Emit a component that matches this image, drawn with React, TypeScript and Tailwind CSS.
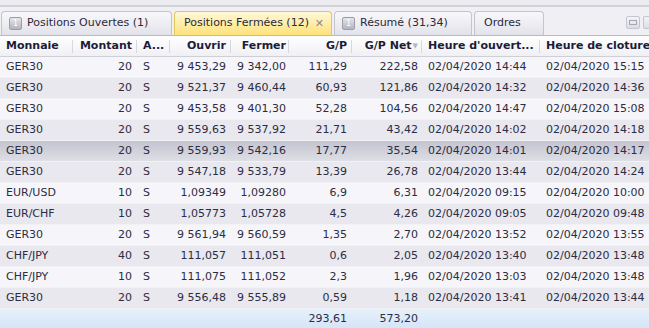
const cols = [
  { key: "m", label: "Monnaie", w: "w-[73px]", align: "text-left pl-[6px]" },
  { key: "q", label: "Montant", w: "w-[64px]", align: "text-right pr-[5px]" },
  { key: "a", label: "A...", w: "w-[33px]", align: "text-left pl-[6px]" },
  { key: "o", label: "Ouvrir", w: "w-[61px]", align: "text-right pr-[5px]" },
  { key: "f", label: "Fermer", w: "w-[58px]", align: "text-right pr-[3px]" },
  { key: "g", label: "G/P", w: "w-[63px]", align: "text-right pr-[5px]" },
  { key: "n", label: "G/P Net", w: "w-[70px]", align: "text-right pr-[4px]" },
  { key: "ho", label: "Heure d'ouvert...", w: "w-[118px]", align: "text-left pl-[6px]" },
  { key: "hc", label: "Heure de cloture", w: "w-[120px]", align: "text-left pl-[6px]" },
];

const d = "02/04/2020 ";

const rows = [
  ["GER30", "20", "S", "9 453,29", "9 342,00", "111,29", "222,58", d + "14:44", d + "15:15"],
  ["GER30", "20", "S", "9 521,37", "9 460,44", "60,93", "121,86", d + "14:32", d + "14:36"],
  ["GER30", "20", "S", "9 453,58", "9 401,30", "52,28", "104,56", d + "14:47", d + "15:08"],
  ["GER30", "20", "S", "9 559,63", "9 537,92", "21,71", "43,42", d + "14:02", d + "14:18"],
  ["GER30", "20", "S", "9 559,93", "9 542,16", "17,77", "35,54", d + "14:01", d + "14:17"],
  ["GER30", "20", "S", "9 547,18", "9 533,79", "13,39", "26,78", d + "13:44", d + "14:24"],
  ["EUR/USD", "10", "S", "1,09349", "1,09280", "6,9", "6,31", d + "09:15", d + "10:00"],
  ["EUR/CHF", "10", "S", "1,05773", "1,05728", "4,5", "4,26", d + "09:05", d + "09:48"],
  ["GER30", "20", "S", "9 561,94", "9 560,59", "1,35", "2,70", d + "13:52", d + "13:55"],
  ["CHF/JPY", "40", "S", "111,057", "111,051", "0,6", "2,05", d + "13:40", d + "13:48"],
  ["CHF/JPY", "10", "S", "111,075", "111,052", "2,3", "1,96", d + "13:03", d + "13:48"],
  ["GER30", "20", "S", "9 556,48", "9 555,89", "0,59", "1,18", d + "13:41", d + "13:44"],
];

function TabIcon() {
  return (
    <span className="flex h-[13px] w-[13px] shrink-0 items-center justify-center rounded-[2px] border border-[#9d9daa] bg-[linear-gradient(#e4e4ea,#b4b4c0)] text-[8px] leading-none text-white">
      1
    </span>
  );
}

function Tab({ label, icon, active, close, w }: { label: string; icon?: boolean; active?: boolean; close?: boolean; w: string }) {
  return (
    <div
      className={`flex h-[24px] shrink-0 ${w} items-center gap-[5px] rounded-t-[4px] border border-b-0 pl-[7px] pr-[7px] ${
        active
          ? "border-[#e5c45a] bg-[linear-gradient(#fff8d8,#ffe27a)]"
          : "border-[#c4c4d0] bg-[linear-gradient(#f8f8fb,#e2e2ea)]"
      }`}
    >
      {icon && <TabIcon />}
      <span className={`whitespace-nowrap text-[11px] text-[#2a2a3c] ${icon ? "" : "pl-[2px]"}`}>{label}</span>
      {close && <span className="ml-auto text-[11px] leading-none text-[#8a8a96]">✕</span>}
    </div>
  );
}

export default function App() {
  return (
    <div className="relative h-[328px] w-[649px] overflow-hidden bg-[#f6f6f9] font-['DejaVu_Sans',Verdana,sans-serif]">
      <div className="h-[5px] bg-[#ececf0]" />
      <div className="h-[2px] bg-[#d2d2da]" />
      <div className="flex h-[29px] items-end gap-[2px] border-b border-[#b9b9c6] bg-[#f0f0f4] pl-[1px]">
        <Tab label="Positions Ouvertes (1)" icon w="w-[171px]" />
        <Tab label="Positions Fermées (12)" active close w="w-[158px]" />
        <Tab label="Résumé (31,34)" icon w="w-[138px]" />
        <Tab label="Ordres" w="w-[70px]" />
        <div className="ml-auto mb-[6px] flex gap-[3px]">
          <div className="flex h-[13px] w-[14px] items-center justify-center rounded-[2px] border border-[#c6c6d0] bg-[linear-gradient(#f4f4f7,#dcdce4)]">
            <div className="h-[5px] w-[8px] border border-[#a6a6b2]" />
          </div>
          <div className="h-[13px] w-[6px] rounded-l-[2px] border border-r-0 border-[#c6c6d0] bg-[linear-gradient(#f4f4f7,#dcdce4)]" />
        </div>
      </div>

      <div className="flex h-[21px] items-center border-b border-[#cfcfd9] bg-[linear-gradient(#ffffff,#f0f0f4)]">
        {cols.map((c, i) => (
          <div
            key={c.key}
            className={`relative flex h-full shrink-0 items-center ${c.w} ${c.align.includes("right") ? "justify-end" : "justify-start"} ${c.align.replace("text-left", "").replace("text-right", "")}`}
          >
            <span className="whitespace-nowrap text-[11px] font-bold text-[#1c1c38]">{c.label}</span>
            {c.key === "n" && <span className="ml-[1px] text-[7px] text-[#b4b4c0]">▼</span>}
            {i < cols.length - 1 && (
              <span className="absolute right-0 top-[4px] h-[13px] w-px bg-[#d8d8e0]" />
            )}
          </div>
        ))}
      </div>

      {rows.map((r, ri) => (
        <div
          key={ri}
          className={`flex h-[21px] items-center border-b border-[#f2f2f6] ${
            ri === 4
              ? "bg-[linear-gradient(#c4c4d0,#dedee6)]"
              : ri % 2 === 1
              ? "bg-[#e8e8ee]"
              : "bg-[#f6f6fa]"
          }`}
        >
          {cols.map((c, ci) => (
            <div key={c.key} className={`shrink-0 whitespace-nowrap text-[11px] text-[#2c2c44] ${c.w} ${c.align}`}>
              {r[ci]}
            </div>
          ))}
        </div>
      ))}

      <div className="flex h-[20px] items-center bg-[linear-gradient(#e6f0fb,#d4e5f7)]">
        {cols.map((c) => (
          <div key={c.key} className={`shrink-0 whitespace-nowrap text-[11px] text-[#2c2c44] ${c.w} ${c.align}`}>
            {c.key === "g" ? "293,61" : c.key === "n" ? "573,20" : ""}
          </div>
        ))}
      </div>
    </div>
  );
}
